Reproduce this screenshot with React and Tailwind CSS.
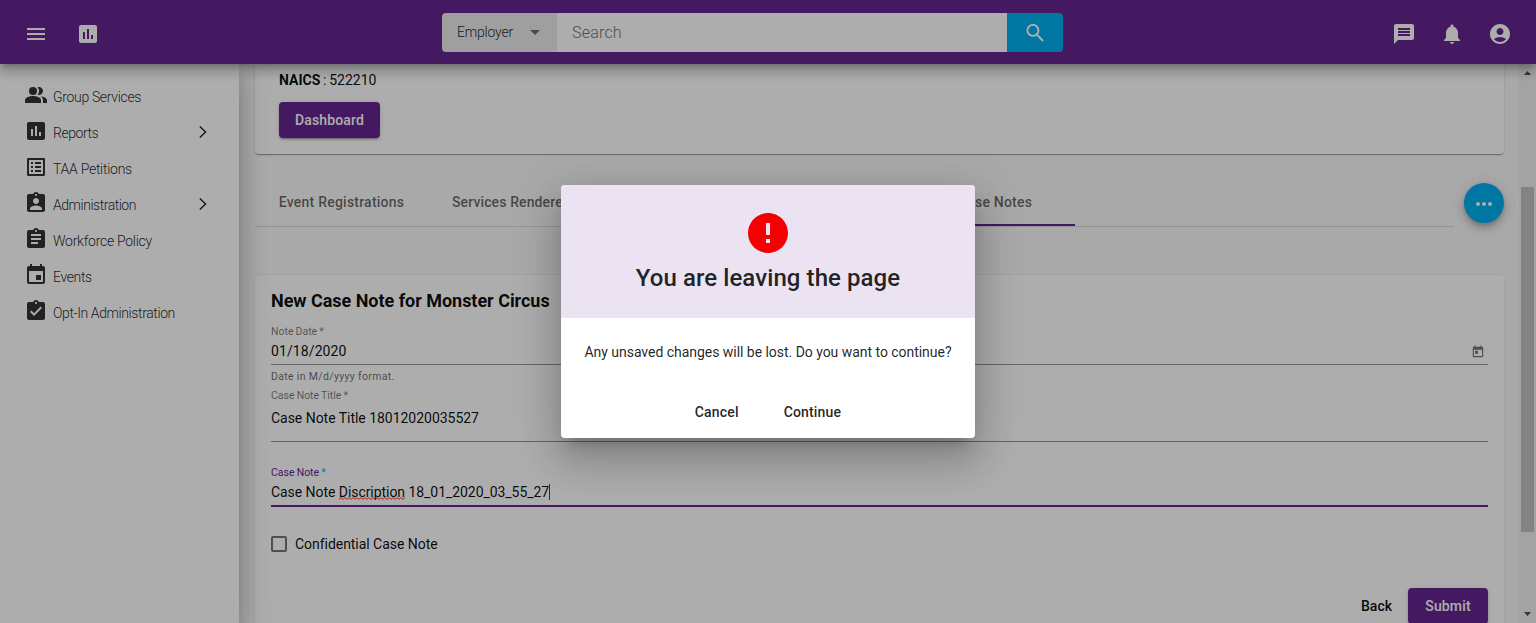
import {
  MdMenu, MdAssessment, MdArrowDropDown, MdMessage, MdNotifications, MdAccountCircle,
  MdPeopleAlt, MdListAlt, MdAssignmentInd, MdAssignment, MdEvent, MdAssignmentTurnedIn,
  MdMoreHoriz, MdToday, MdError,
} from "react-icons/md";

const menu = [
  { label: "Group Services", Icon: MdPeopleAlt, tracking: "tracking-[-0.33px]" },
  { label: "Reports", Icon: MdAssessment, expandable: true, tracking: "tracking-[-0.45px]" },
  { label: "TAA Petitions", Icon: MdListAlt, tracking: "tracking-[-0.27px]" },
  { label: "Administration", Icon: MdAssignmentInd, expandable: true, tracking: "tracking-[-0.48px]" },
  { label: "Workforce Policy", Icon: MdAssignment, tracking: "tracking-[-0.27px]" },
  { label: "Events", Icon: MdEvent, tracking: "tracking-[-0.35px]" },
  { label: "Opt-In Administration", Icon: MdAssignmentTurnedIn, tracking: "tracking-[-0.4px]" },
];

function SearchIcon() {
  return (
    <svg width="18" height="18" viewBox="0 0 18 18" fill="none" stroke="currentColor" strokeWidth="1.9">
      <circle cx="6.9" cy="6.4" r="5.5" />
      <path d="M10.8 10.4 17 17" />
    </svg>
  );
}

function ChevronIcon() {
  return (
    <svg width="8" height="12" viewBox="0 0 8 12" fill="none" stroke="#222" strokeWidth="1.4" className="ml-auto mr-2">
      <path d="M0.8 0.5 6.6 6 0.8 11.5" />
    </svg>
  );
}

function Header() {
  return (
    <header className="relative z-20 flex h-16 shrink-0 items-center bg-[#65268f] pl-6 pr-6 text-white shadow-[0_5px_5px_-3px_rgba(0,0,0,0.2),0_8px_10px_1px_rgba(0,0,0,0.14),0_3px_14px_2px_rgba(0,0,0,0.12)]">
      <div className="flex w-[418px] gap-7 pt-1">
        <MdMenu size={24} />
        <MdAssessment size={24} />
      </div>
      <div className="flex h-[39px] w-[621px] overflow-hidden rounded">
        <div className="flex w-[115px] items-center justify-between bg-[#ebebeb] pl-[15px] pr-[10px] text-sm font-light text-black/87">
          <span className="tracking-[-0.2px]">Employer</span>
          <MdArrowDropDown size={24} className="text-black/54" />
        </div>
        <div className="flex flex-1 items-center bg-white pl-[15px] pt-px text-base font-light tracking-[0.2px] text-[#757575]">Search</div>
        <div className="flex w-14 items-center justify-center bg-[#00aeef] pt-0.5">
          <SearchIcon />
        </div>
      </div>
      <div className="ml-auto flex gap-6 pt-1">
        <MdMessage size={24} />
        <MdNotifications size={24} />
        <MdAccountCircle size={24} />
      </div>
    </header>
  );
}

function Sidebar() {
  return (
    <nav className="relative z-10 w-[239px] shrink-0 bg-white pt-[14px] shadow-[0_8px_10px_-5px_rgba(0,0,0,0.2),0_16px_24px_2px_rgba(0,0,0,0.14),0_6px_30px_5px_rgba(0,0,0,0.12)]">
      {menu.map(({ label, Icon, expandable, tracking }) => (
        <div key={label} className="flex h-9 items-center pl-6 pr-6 text-[#333]">
          <Icon size={24} className="mb-0.5 mr-[5px]" />
          <span className={`pt-px text-sm font-light text-black/87 ${tracking}`}>{label}</span>
          {expandable && <ChevronIcon />}
        </div>
      ))}
    </nav>
  );
}

function SummaryCard() {
  return (
    <section className="h-[90px] shrink-0 rounded-b bg-white pl-6 pt-1 shadow-[0_2px_1px_-1px_rgba(0,0,0,0.2),0_1px_1px_0_rgba(0,0,0,0.14),0_1px_3px_0_rgba(0,0,0,0.12)]">
      <p className="text-sm leading-6 text-black/95 [word-spacing:-0.7px]">
        <b className="font-bold">NAICS</b> : 522210
      </p>
      <button className="mt-[10px] flex h-9 w-[101px] items-center justify-center rounded bg-[#65268f] text-sm font-medium tracking-[0.15px] text-white shadow-[0_3px_1px_-2px_rgba(0,0,0,0.2),0_2px_2px_0_rgba(0,0,0,0.14),0_1px_5px_0_rgba(0,0,0,0.12)]">
        Dashboard
      </button>
    </section>
  );
}

function Tabs() {
  return (
    <div className="mt-[24px] flex h-[49px] shrink-0 justify-between">
      <div className="flex w-[1199px] border-b border-black/12 text-sm font-medium text-black/60">
        <div className="flex w-[173px] items-center justify-center tracking-[0.22px]">Event Registrations</div>
        <div className="flex w-[320px] items-center pl-6 tracking-[0.12px]">Services Rendered</div>
        <div className="ml-[167px] flex w-40 items-center justify-center border-b-2 border-[#65268f] pt-0.5 tracking-[0.2px]">Case Notes</div>
      </div>
      <div className="mt-[5px] flex size-10 items-center justify-center rounded-full bg-[#00aeef] pt-px text-white shadow-[0_3px_5px_-1px_rgba(0,0,0,0.2),0_6px_10px_0_rgba(0,0,0,0.14),0_1px_18px_0_rgba(0,0,0,0.12)]">
        <MdMoreHoriz size={24} />
      </div>
    </div>
  );
}

function Misspelled({ children }) {
  return (
    <span className="relative inline-block">
      {children}
      <svg width="66" height="3" className="absolute left-0 top-[15px]" aria-hidden="true">
        <defs>
          <pattern id="squiggle" width="4" height="3" patternUnits="userSpaceOnUse">
            <path d="M0 2.4 2 .6 4 2.4" fill="none" stroke="#f33" strokeWidth="1" />
          </pattern>
        </defs>
        <rect width="66" height="3" fill="url(#squiggle)" />
      </svg>
    </span>
  );
}

function NoteForm() {
  return (
    <section className="mt-12 flex-1 rounded-t bg-white px-4 pt-[14px] text-sm text-black/95 shadow-[0_0_2px_0_rgba(0,0,0,0.14)]">
      <h2 className="text-lg font-bold leading-6 tracking-[-0.03px]">New Case Note for Monster Circus</h2>
      <div className="mt-[13px] text-[10.5px] leading-3 text-black/54 [word-spacing:-0.5px]">Note Date *</div>
      <div className="flex h-[27px] items-center justify-between border-b border-black/42">
        <span className="tracking-[0.1px]">01/18/2020</span>
        <MdToday size={14} className="mr-[3px] mt-px text-black/54" />
      </div>
      <div className="mt-[6px] text-[10.5px] leading-3 tracking-[0.33px] text-black/60">Date in M/d/yyyy format.</div>
      <div className="mt-[7px] text-[10.5px] leading-3 text-black/54 [word-spacing:-0.5px]">Case Note Title *</div>
      <div className="h-[40px] border-b border-black/42 pt-[6px] leading-5 tracking-[-0.03px]">Case Note Title 18012020035527</div>
      <div className="mt-[25px] text-[10.5px] leading-3 text-[#65268f] [word-spacing:-0.5px]">
        Case Note <span className="text-[#00aeef]">*</span>
      </div>
      <div className="flex h-[28px] border-b-2 border-[#65268f] pt-[3px] leading-5 tracking-[-0.055px]">
        <span className="whitespace-pre">
          Case Note <Misspelled>Discription</Misspelled> 18_01_2020_03_55_27
        </span>
        <span className="h-4 w-px translate-y-0.5 bg-[#65268f]" />
      </div>
      <div className="mt-[27px] flex h-5 items-center gap-2">
        <span className="size-4 rounded-[2px] border-2 border-black/54" />
        <span className="tracking-[-0.04px]">Confidential Case Note</span>
      </div>
      <div className="mt-[34px] flex h-9 items-center justify-end gap-4 font-medium">
        <span>Back</span>
        <button className="h-9 w-20 rounded bg-[#65268f] tracking-[0.15px] text-white shadow-[0_3px_1px_-2px_rgba(0,0,0,0.2),0_2px_2px_0_rgba(0,0,0,0.14),0_1px_5px_0_rgba(0,0,0,0.12)]">
          Submit
        </button>
      </div>
    </section>
  );
}

function Scrollbar() {
  return (
    <div className="flex w-[17px] shrink-0 flex-col items-center bg-[#f1f1f1] pt-[7px]">
      <svg width="7" height="4" viewBox="0 0 7 4" className="shrink-0"><path d="M0 4 3.5 0 7 4Z" fill="#505050" /></svg>
      <div className="mt-[112px] h-[345px] w-[13px] shrink-0 bg-[#c1c1c1]" />
      <svg width="7" height="4" viewBox="0 0 7 4" className="mt-[80px] shrink-0"><path d="M0 0 3.5 4 7 0Z" fill="#505050" /></svg>
    </div>
  );
}

function LeaveDialog() {
  return (
    <div className="absolute inset-0 z-30 flex justify-center bg-black/32 pt-[185px]">
      <div className="flex h-[253px] w-[414px] flex-col overflow-hidden rounded bg-white text-black/87 shadow-[0_11px_15px_-7px_rgba(0,0,0,0.2),0_24px_38px_3px_rgba(0,0,0,0.14),0_9px_46px_8px_rgba(0,0,0,0.12)]">
        <div className="flex h-[133px] flex-col items-center bg-[#ebe3f2] pt-6">
          <MdError size={48} className="text-[#f50000]" />
          <h1 className="mt-[5px] text-2xl font-medium leading-8 tracking-[0.08px]">You are leaving the page</h1>
        </div>
        <p className="mt-6 text-center text-sm leading-5 tracking-[-0.035px]">Any unsaved changes will be lost. Do you want to continue?</p>
        <div className="mt-[40px] flex justify-center gap-[45px] text-sm font-medium leading-5 tracking-[0.17px]">
          <button>Cancel</button>
          <button>Continue</button>
        </div>
      </div>
    </div>
  );
}

export default function App() {
  return (
    <div className="relative flex h-[623px] w-[1536px] flex-col overflow-hidden bg-[#fafafa] font-['Roboto',sans-serif] text-black/87">
      <Header />
      <div className="flex min-h-0 flex-1">
        <Sidebar />
        <main className="flex min-w-0 flex-1 flex-col overflow-hidden pl-4 pr-[15px]">
          <SummaryCard />
          <Tabs />
          <NoteForm />
        </main>
        <Scrollbar />
      </div>
      <LeaveDialog />
    </div>
  );
}
